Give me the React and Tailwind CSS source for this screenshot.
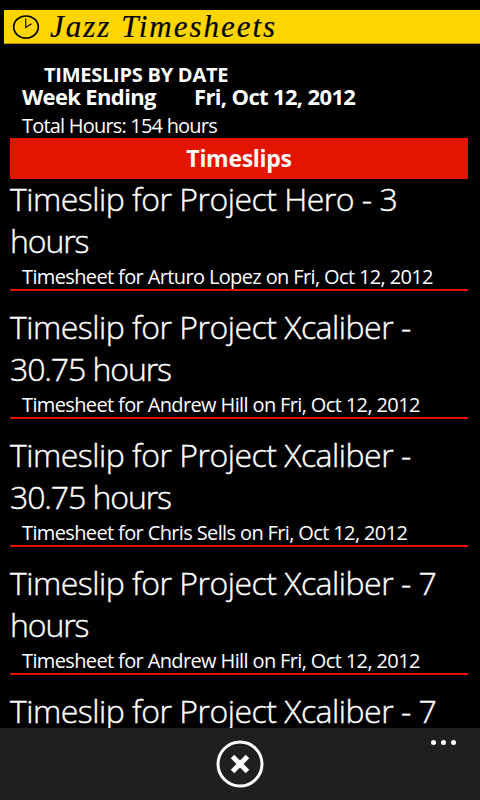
import React from 'react';

const timeslips = [
  { id: 1, project: 'Project Hero', hours: '3', owner: 'Arturo Lopez' },
  { id: 2, project: 'Project Xcaliber', hours: '30.75', owner: 'Andrew Hill' },
  { id: 3, project: 'Project Xcaliber', hours: '30.75', owner: 'Chris Sells' },
  { id: 4, project: 'Project Xcaliber', hours: '7', owner: 'Andrew Hill' },
];

function Banner() {
  return (
    <header className="ml-1 mt-2.5 h-[34px] shrink-0 flex items-center bg-[#ffd500] border-b border-[#b39500] text-black">
      <svg className="ml-2 w-7 h-7 shrink-0" viewBox="0 0 28 28" fill="none" stroke="currentColor">
        <ellipse cx="14" cy="14" rx="12.3" ry="11" strokeWidth="1.7" />
        <path d="M13.7 5.5V14.5L19.5 10.8" strokeWidth="1.1" />
      </svg>
      <span className="ml-2.5 font-['Liberation_Serif',serif] italic text-[31px] leading-[33px] tracking-[2px] whitespace-nowrap [-webkit-text-stroke:0.2px_black]">
        Jazz Timesheets
      </span>
    </header>
  );
}

function TimeslipTitle({ project, hours, unit }) {
  return (
    <h2 className="w-[440px] font-light text-[32px] leading-[42px] tracking-[-0.5px] [-webkit-text-stroke:0.4px_white]">
      Timeslip for {project} - <span className="tracking-[-1.1px]">{hours} {unit}</span>
    </h2>
  );
}

function Timeslip({ slip }) {
  return (
    <li className="h-[113px] mb-[15px] border-b-2 border-[#e51400]">
      <TimeslipTitle project={slip.project} hours={slip.hours} unit="hours" />
      <p className="pt-px pl-3 text-[20px] leading-[27px] tracking-[-0.63px] whitespace-nowrap">
        Timesheet for {slip.owner} on Fri, Oct 12, 2012
      </p>
    </li>
  );
}

export default function App() {
  return (
    <div className="w-[480px] h-[800px] flex flex-col overflow-hidden bg-black text-white font-['Open_Sans','Noto_Sans',sans-serif]">
      <Banner />

      {/* Week summary */}
      <section className="shrink-0 h-[94px] pl-[22px] pt-[20px] whitespace-nowrap">
        <h1 className="pl-[22px] font-bold text-[20px] leading-[22px] tracking-[-0.25px]">TIMESLIPS BY DATE</h1>
        <div className="-mt-px flex font-bold text-[22px] leading-[22px] tracking-[-0.65px]">
          <span className="w-[172px]">Week Ending</span>
          <span>Fri, Oct 12, 2012</span>
        </div>
        <p className="mt-1.5 text-[20px] leading-[26px] tracking-[-0.8px]">Total Hours: 154 hours</p>
      </section>

      {/* Timeslip list */}
      <main className="flex-1 min-h-0 overflow-hidden pl-2.5 pr-3">
        <div className="h-[41px] pb-px flex items-center justify-center bg-[#e51400] font-bold text-[23px] tracking-[-0.3px]">Timeslips</div>
        <ul className="-mt-px">
          {timeslips.map((slip) => (
            <Timeslip key={slip.id} slip={slip} />
          ))}
          <li>
            <TimeslipTitle project="Project Xcaliber" hours="7" />
          </li>
        </ul>
      </main>

      {/* App bar */}
      <footer className="relative h-[72px] shrink-0 flex items-center justify-center bg-[#1f1f1f]">
        <button aria-label="Close">
          <svg className="w-12 h-12" viewBox="0 0 48 48" fill="none" stroke="currentColor">
            <circle cx="24" cy="24" r="22" strokeWidth="3" />
            <path d="M16.5 16.5L31.5 31.5M31.5 16.5L16.5 31.5" strokeWidth="5" />
          </svg>
        </button>
        <button aria-label="More" className="absolute right-6 top-3 flex gap-[5px]">
          <span className="w-[5px] h-[5px] rounded-full bg-white" />
          <span className="w-[5px] h-[5px] rounded-full bg-white" />
          <span className="w-[5px] h-[5px] rounded-full bg-white" />
        </button>
      </footer>
    </div>
  );
}
